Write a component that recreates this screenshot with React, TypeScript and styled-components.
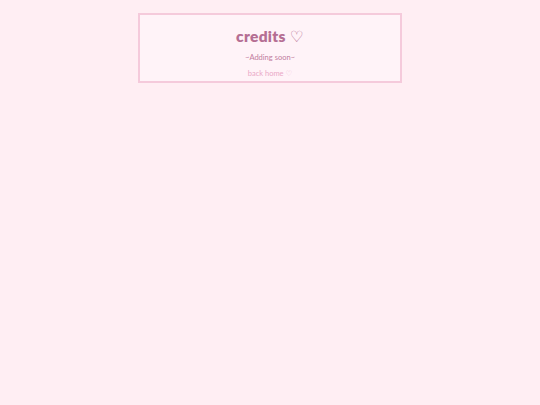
import React from "react";
import styled, { createGlobalStyle } from "styled-components";

const Global = createGlobalStyle`
  html, body { margin: 0; padding: 0; background: #ffeef3; }
  body { font-family: "Lato", "Open Sans", sans-serif; }
`;

const Page = styled.div`
  min-height: 405px;
  display: flex;
  justify-content: center;
  padding-top: 13px;
  box-sizing: border-box;
`;

const Card = styled.section`
  width: 264px;
  height: 70px;
  box-sizing: border-box;
  border: 2px solid #f5cadb;
  background: #fff3f8;
  display: flex;
  flex-direction: column;
  align-items: center;
  padding-top: 11px;
`;

const Title = styled.h1`
  margin: 0;
  font-family: "Comic Sans MS", "Lato", sans-serif;
  font-weight: 800;
  font-size: 15.5px;
  line-height: 20px;
  color: #b56e93;
  letter-spacing: 0.3px;
`;

const Heart = styled.span`
  font-family: "DejaVu Sans", sans-serif;
  font-weight: 400;
  margin-left: 4px;
`;

const Sub = styled.p`
  margin: 6px 0 0;
  font-size: 7.5px;
  line-height: 10px;
  color: #c27d9f;
`;

const Back = styled.a`
  margin-top: 6px;
  font-size: 7.5px;
  line-height: 10px;
  color: #eaa8c6;
  text-decoration: none;
`;

const SmallHeart = styled.span`
  font-family: "DejaVu Sans", sans-serif;
  color: #f3c4d8;
  margin-left: 2px;
`;

export default function App() {
  return (
    <>
      <Global />
      <Page>
        <Card>
          <Title>
            credits<Heart>♡</Heart>
          </Title>
          <Sub>~Adding soon~</Sub>
          <Back href="#">
            back home<SmallHeart>♡</SmallHeart>
          </Back>
        </Card>
      </Page>
    </>
  );
}
